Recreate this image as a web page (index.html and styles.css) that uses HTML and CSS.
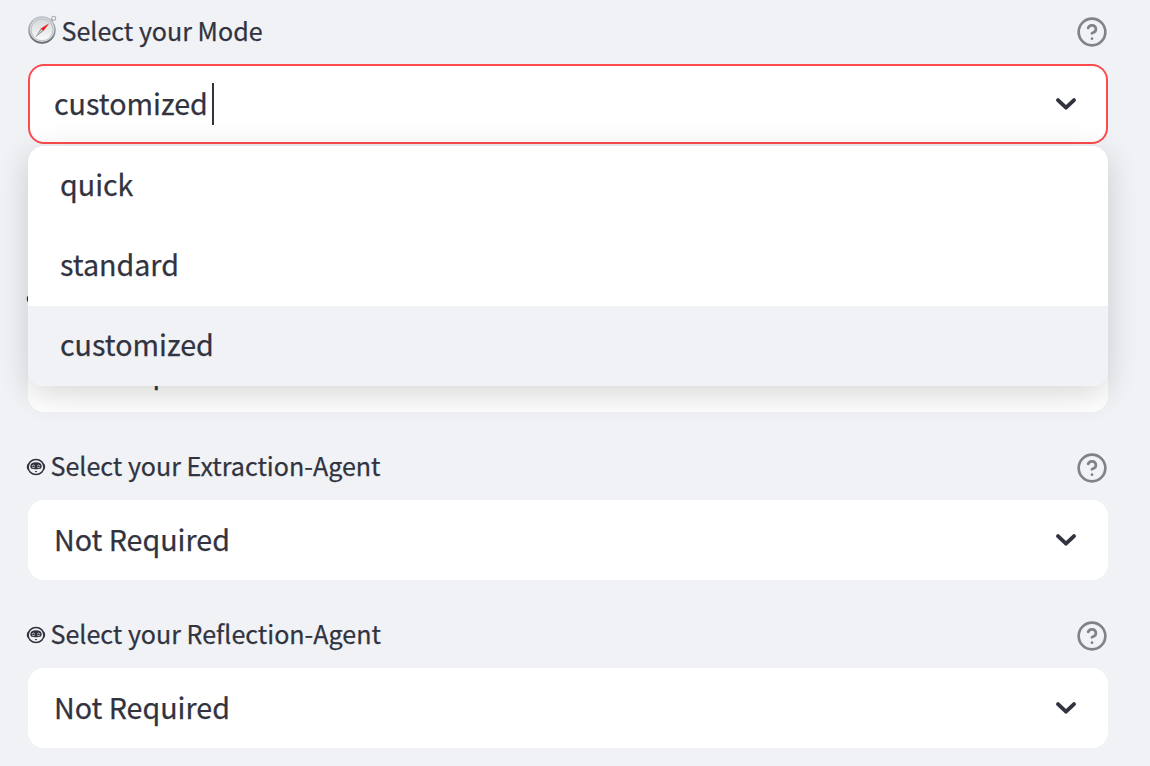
FILE: index.html
```html
<!DOCTYPE html>
<html lang="en">
<head>
<meta charset="utf-8">
<title>Agent settings</title>
<link rel="stylesheet" href="styles.css">
</head>
<body>
<svg class="defs" aria-hidden="true">
  <symbol id="help" viewBox="0 0 24 24">
    <g fill="none" stroke="currentColor" stroke-width="2" stroke-linecap="round" stroke-linejoin="round">
      <circle cx="12" cy="12" r="10"/>
      <path d="M9.09 9a3 3 0 0 1 5.83 1c0 2-3 3-3 3"/>
      <path d="M12 17h.01"/>
    </g>
  </symbol>
  <symbol id="chevron" viewBox="0 0 24 16">
    <path d="M4 4.100L12 11.700L20 4.100" fill="none" stroke="currentColor" stroke-width="3.900" stroke-linecap="round" stroke-linejoin="round"/>
  </symbol>
  <symbol id="robot" viewBox="0 0 20 18">
    <path d="M2.600 5.600C.2 6.200.2 11.800 2.600 12.400ZM17.400 5.600C19.800 6.200 19.800 11.800 17.400 12.400Z" fill="currentColor"/>
    <ellipse cx="10" cy="9" rx="7.900" ry="7.600" fill="none" stroke="currentColor" stroke-width="1.500"/>
    <path d="M4.300 8.600C4.300 5.600 6.200 4.300 10 4.300S15.700 5.600 15.700 8.600C15.700 10.700 14 11.300 10 11.300S4.300 10.700 4.300 8.600Z" fill="currentColor"/>
    <path d="M5.900 8.100Q7.400 6.100 8.900 8.100M11.100 8.100Q12.600 6.100 14.100 8.100M6.200 9.600h2.400M11.400 9.600h2.400" fill="none" stroke="#f0f2f6" stroke-width="0.8"/>
    <path d="M9 13.600h2" stroke="currentColor" stroke-width="1"/>
  </symbol>
</svg>
<main class="panel">
  <section class="field">
    <div class="label">
      <svg class="compass" viewBox="0 0 30 30" aria-hidden="true">
        <defs>
          <linearGradient id="rim" x1="0" y1="0" x2="0" y2="1"><stop offset="0" stop-color="#b4bec8"/><stop offset=".5" stop-color="#9ca2a9"/><stop offset="1" stop-color="#62676c"/></linearGradient>
          <linearGradient id="dial" x1="0" y1="0" x2="0" y2="1"><stop offset="0" stop-color="#d5d8da"/><stop offset="1" stop-color="#fafafa"/></linearGradient>
        </defs>
        <circle cx="25.700" cy="3.300" r="2" fill="none" stroke="#a3adb6" stroke-width="1.100"/>
        <path d="M22 7l2-2" stroke="#89929a" stroke-width="2"/>
        <circle cx="14" cy="15" r="13.800" fill="url(#rim)"/>
        <circle cx="14" cy="14.700" r="12.200" fill="#dce0e3"/>
        <circle cx="14" cy="14.800" r="10.900" fill="url(#dial)" stroke="#a9adb1" stroke-width=".7"/>
        <path d="M7.300 22.200L12.800 13.500L15.300 16Z" fill="#8a8a8a"/>
        <path d="M8.500 20.500L13.700 14.500L14.600 15.300Z" fill="#e8e8e8"/>
        <path d="M21.300 8.200L12.800 13.500L15.300 16Z" fill="#f01818"/>
      </svg>
      <span class="label-text">Select your Mode</span>
      <svg class="help"><use href="#help"/></svg>
    </div>
    <div class="select focused">
      <span class="value">customized</span><span class="caret"></span>
      <svg class="chevron"><use href="#chevron"/></svg>
      <ul class="menu">
        <li class="option">quick</li>
        <li class="option">standard</li>
        <li class="option active">customized</li>
      </ul>
    </div>
  </section>
  <section class="field spaced">
    <div class="label">
      <svg class="robot"><use href="#robot"/></svg>
    </div>
    <div class="select"><span class="value">Not Required</span></div>
  </section>
  <section class="field">
    <div class="label">
      <svg class="robot"><use href="#robot"/></svg>
      <span class="label-text agent">Select your Extraction-Agent</span>
      <svg class="help"><use href="#help"/></svg>
    </div>
    <div class="select">
      <span class="value">Not Required</span>
      <svg class="chevron"><use href="#chevron"/></svg>
    </div>
  </section>
  <section class="field">
    <div class="label">
      <svg class="robot"><use href="#robot"/></svg>
      <span class="label-text agent">Select your Reflection-Agent</span>
      <svg class="help"><use href="#help"/></svg>
    </div>
    <div class="select">
      <span class="value">Not Required</span>
      <svg class="chevron"><use href="#chevron"/></svg>
    </div>
  </section>
</main>
</body>
</html>
```
FILE: styles.css
```css
* { box-sizing: border-box; }
body {
  margin: 0;
  height: 766px;
  overflow: hidden;
  background: #f0f2f6;
  color: #31333f;
  font-family: "Noto Sans CJK SC", "Noto Sans", sans-serif;
  -webkit-text-stroke: 0.25px currentColor;
}
.defs { position: absolute; width: 0; height: 0; }
.panel {
  width: 1108px;
  padding: 8px 0 0 28px;
  display: flex;
  flex-direction: column;
  gap: 32px;
}
.field { display: flex; flex-direction: column; gap: 8px; }
.spaced { margin-top: 100px; }
.label { height: 48px; display: flex; align-items: center; }
.label-text { padding-bottom: 4px; font-size: 25.07px; line-height: 40px; white-space: nowrap; }
.agent { padding-bottom: 6px; }
.compass { width: 30px; height: 30px; margin: -4px 3.500px 0 0; }
.robot { width: 20px; height: 18px; margin: 0 4.500px 2px -2px; }
.help { width: 32px; height: 32px; margin-left: auto; color: #808289; }
.select {
  position: relative;
  height: 80px;
  padding: 0 30px 0 26px;
  display: flex;
  align-items: center;
  background: #fff;
  border-radius: 16px;
}
.focused { border: 2px solid #ff4b4b; padding: 0 28px 0 24px; }
.value { padding-bottom: 2px; font-size: 28.65px; line-height: 48px; white-space: nowrap; }
.caret { width: 2px; height: 42px; margin-left: 4px; background: #31333f; }
.chevron { width: 24px; height: 16px; margin-left: auto; }
.menu {
  position: absolute;
  z-index: 2;
  top: 80px;
  left: -2px;
  right: -2px;
  margin: 0;
  padding: 0;
  list-style: none;
  background: #fff;
  border-radius: 16px;
  overflow: hidden;
  box-shadow: 0 8px 32px rgba(0, 0, 0, 0.16);
}
.option {
  height: 80px;
  padding: 0 32px;
  font-size: 28.65px;
  line-height: 76px;
}
.active { background: #f0f2f6; }
```
